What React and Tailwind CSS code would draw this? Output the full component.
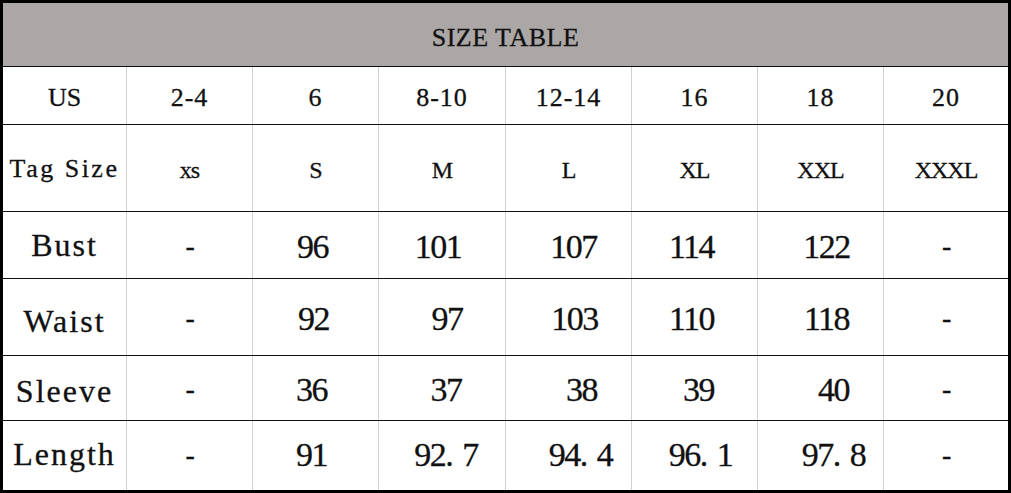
const COLS = [
  'w-[124px] border-r border-[#cfcfcf]',
  'w-[126px] border-r border-[#cfcfcf]',
  'w-[126px] border-r border-[#cfcfcf]',
  'w-[127px] border-r border-[#cfcfcf]',
  'w-[126px] border-r border-[#cfcfcf]',
  'w-[126px] border-r border-[#cfcfcf]',
  'w-[126px] border-r border-[#cfcfcf]',
  'flex-1',
]

// each cell: [text, padding class that nudges it off centre like the original]
const ROWS = [
  {
    h: 'h-[58px]',
    label: 'US',
    labelCls: 'text-[26px] pt-[3px]',
    cellCls: 'text-[26px] tracking-[1px] pt-[3px]',
    cells: [['2-4'], ['6'], ['8-10'], ['12-14'], ['16'], ['18'], ['20']],
  },
  {
    h: 'h-[87px]',
    label: 'Tag Size',
    labelCls: 'text-[26px] tracking-[2.5px] whitespace-nowrap',
    cellCls: 'text-[24px] tracking-[-1px] pt-[4px]',
    cells: [['xs'], ['S'], ['M'], ['L'], ['XL'], ['XXL'], ['XXXL']],
  },
  {
    h: 'h-[67px]',
    label: 'Bust',
    labelCls: 'text-[32px] tracking-[2px]',
    cellCls: 'text-[34px] tracking-[-1.5px] pt-[2px]',
    cells: [['-'], ['96', 'pr-[6px]'], ['101', 'pr-[8px]'], ['107', 'pl-[10px]'], ['114', 'pr-[6px]'], ['122', 'pl-[12px]'], ['-']],
  },
  {
    h: 'h-[77px]',
    label: 'Waist',
    labelCls: 'text-[32px] tracking-[2px] pt-[8px]',
    cellCls: 'text-[34px] tracking-[-1.5px] pt-[2px]',
    cells: [['-'], ['92', 'pr-[4px]'], ['97', 'pl-[10px]'], ['103', 'pl-[12px]'], ['110', 'pr-[6px]'], ['118', 'pl-[12px]'], ['-']],
  },
  {
    h: 'h-[65px]',
    label: 'Sleeve',
    labelCls: 'text-[32px] tracking-[2px] pt-[6px]',
    cellCls: 'text-[34px] tracking-[-1.5px] pt-[2px]',
    cells: [['-'], ['36', 'pr-[8px]'], ['37', 'pl-[8px]'], ['38', 'pl-[26px]'], ['39', 'pl-[8px]'], ['40', 'pl-[26px]'], ['-']],
  },
  {
    h: 'h-[69px]',
    label: 'Length',
    labelCls: 'text-[32px] tracking-[2px] pb-[4px]',
    cellCls: 'text-[34px] tracking-[-1.5px] pb-[2px]',
    cells: [['-'], ['91', 'pr-[8px]'], ['92.7', 'pl-[8px]'], ['94.4', 'pl-[24px]'], ['96.1', 'pl-[12px]'], ['97.8', 'pl-[26px]']],
  },
]

function Value({ text }) {
  // the source font sets the decimal point wide, "92. 7"
  if (text.includes('.')) {
    const [a, b] = text.split('.')
    return (
      <span>
        {a}.<span className="ml-[10px]">{b}</span>
      </span>
    )
  }
  if (text === '-') return <span className="text-[28px]">-</span>
  return <span>{text}</span>
}

export default function App() {
  return (
    <div
      className="w-[1011px] h-[493px] bg-white border-[3px] border-black flex flex-col text-[#111] overflow-hidden [-webkit-text-stroke:0.3px_#111]"
      style={{ fontFamily: '"Liberation Serif", serif' }}
    >
      <div className="h-[64px] shrink-0 bg-[#aba7a6] border-b border-[#111] flex items-center justify-center pt-[5px]">
        <span className="text-[26px] tracking-[0.5px]">SIZE TABLE</span>
      </div>

      {ROWS.map((row, ri) => (
        <div
          key={row.label}
          className={`${row.h} shrink-0 flex ${ri < ROWS.length - 1 ? 'border-b border-[#111]' : ''}`}
        >
          <div className={`${COLS[0]} flex items-center justify-center ${row.labelCls}`}>
            {row.label}
          </div>
          {[0, 1, 2, 3, 4, 5, 6].map((ci) => {
            const cell = row.cells[ci] || ['-']
            return (
              <div
                key={ci}
                className={`${COLS[ci + 1]} flex items-center justify-center ${row.cellCls} ${cell[1] || ''}`}
              >
                <Value text={cell[0]} />
              </div>
            )
          })}
        </div>
      ))}
    </div>
  )
}
